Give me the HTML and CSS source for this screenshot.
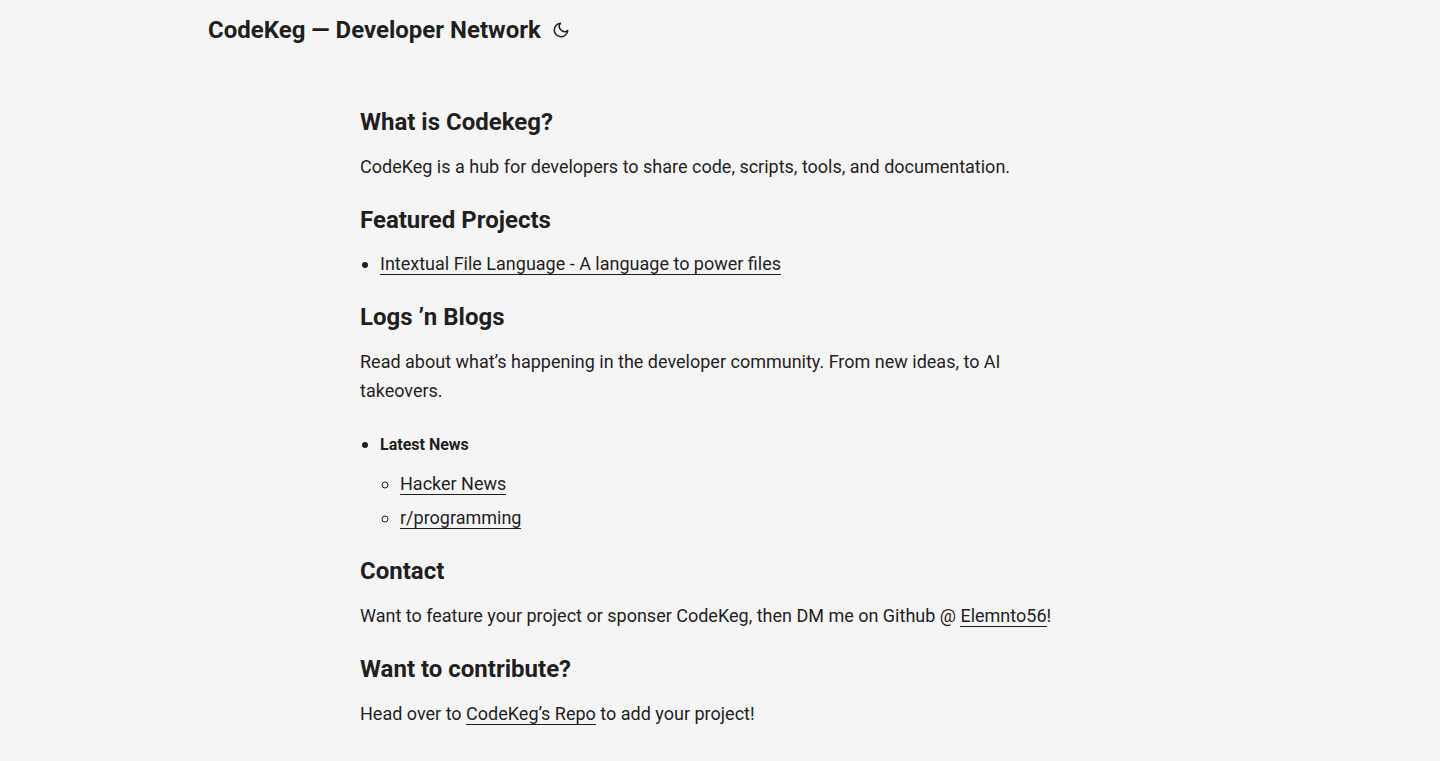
FILE: index.html
```html
<!DOCTYPE html>
<html lang="en">
  <head>
    <meta charset="UTF-8" />
    <meta name="viewport" content="width=device-width, initial-scale=1" />
    <title>CodeKeg — Developer Network</title>
    <link rel="stylesheet" href="styles.css">
  </head>

  <body>
    <header class="header">
      <nav class="nav">
        <a class="logo" href="#">CodeKeg — Developer Network</a>
        <button class="theme-toggle" type="button" aria-label="Toggle theme">
          <svg width="18" height="18" viewBox="0 0 24 24" fill="none" stroke="currentColor" stroke-width="2" stroke-linecap="round" stroke-linejoin="round">
            <path d="M21 12.79A9 9 0 1 1 11.21 3 7 7 0 0 0 21 12.79z"></path>
          </svg>
        </button>
      </nav>
    </header>

    <main class="main">
      <h2>What is Codekeg?</h2>
      <p>CodeKeg is a hub for developers to share code, scripts, tools, and documentation.</p>

      <h2>Featured Projects</h2>
      <ul>
        <li><a href="#">Intextual File Language - A language to power files</a></li>
      </ul>

      <h2>Logs ’n Blogs</h2>
      <p>Read about what’s happening in the developer community. From new ideas, to AI takeovers.</p>
      <ul>
        <li>
          <h5>Latest News</h5>
          <ul>
            <li><a href="#">Hacker News</a></li>
            <li><a href="#">r/programming</a></li>
          </ul>
        </li>
      </ul>

      <h2>Contact</h2>
      <p>Want to feature your project or sponser CodeKeg, then DM me on Github @ <a href="#">Elemnto56</a>!</p>

      <h2>Want to contribute?</h2>
      <p>Head over to <a href="#">CodeKeg’s Repo</a> to add your project!</p>
    </main>
  </body>
</html>
```
FILE: styles.css
```css
* {
  box-sizing: border-box;
  margin: 0;
  padding: 0;
}
body {
  background: #f5f5f5;
  color: #1f1f1f;
  font-family: Roboto, "Liberation Sans", sans-serif;
  font-size: 18px;
  line-height: 29px;
}
a {
  color: inherit;
  text-decoration: none;
}

/* Header */
.nav {
  display: flex;
  align-items: center;
  max-width: 1072px;
  margin: 0 auto;
  padding: 0 24px;
  line-height: 60px;
}
.logo {
  font-size: 24px;
  font-weight: 700;
}
.theme-toggle {
  display: flex;
  margin-left: 11px;
  background: none;
  border: 0;
  color: inherit;
  cursor: pointer;
}

/* Content */
.main {
  max-width: 768px;
  margin: 0 auto;
  padding: 23px 24px;
}
.main h2 {
  margin: 25px 0 16px;
  font-size: 24px;
  line-height: 28px;
}
.main h5 {
  margin: 25px 0 15px;
  font-size: 16px;
  line-height: 20px;
}
.main ul {
  padding-left: 20px;
}
.main li {
  margin-top: 6px;
  line-height: 28px;
}
.main a {
  box-shadow: 0 1px 0 currentColor;
}
```
